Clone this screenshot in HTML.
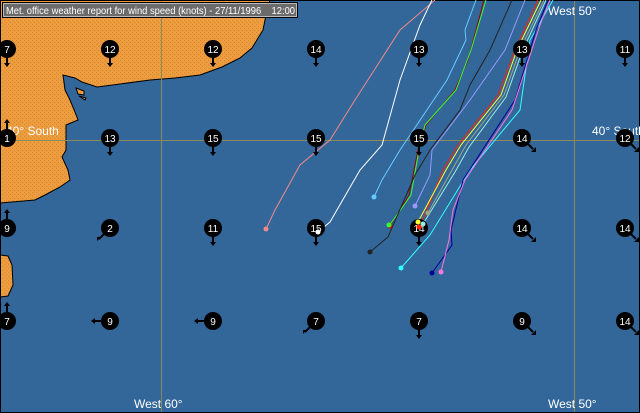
<!DOCTYPE html>
<html><head><meta charset="utf-8"><style>
html,body{margin:0;padding:0;background:#336699;}
svg{display:block}
</style></head><body>
<svg width="640" height="413" viewBox="0 0 640 413" xmlns="http://www.w3.org/2000/svg" font-family="Liberation Sans, sans-serif">
<defs>
<pattern id="land" width="4" height="4" patternUnits="userSpaceOnUse">
<rect width="4" height="4" fill="#eb9c3c"/>
<rect x="0" y="0" width="1" height="1" fill="#e0823c"/>
<rect x="2" y="2" width="1" height="1" fill="#e0823c"/>
<rect x="3" y="0" width="1" height="1" fill="#f0a640"/>
</pattern>
</defs>
<rect width="640" height="413" fill="#336699"/>
<path d="M0,0 L270,0 L265,20 L263,30 L252,48 L240,58 L222,67 L200,75 L175,78 L150,80 L120,84 L97,87 L82,82 L75,78 L63,75 L65,90 L70,100 L75,112 L78,120 L66,125 L66,150 L62,157 L68,170 L70,180 L60,187 L45,195 L35,200 L0,203 Z" fill="url(#land)" stroke="#000" stroke-width="1"/>
<path d="M76,88 L84,91 L84,95 L78,94 Z M79,96 L86,98 L85,100 Z" fill="url(#land)" stroke="#000"/>
<path d="M0,255 L8,256 L12,265 L13,285 L8,296 L0,297 Z" fill="url(#land)" stroke="#000"/>
<g stroke="#8a8a5a" stroke-width="1">
<line x1="0" y1="140.5" x2="640" y2="140.5"/>
<line x1="161.5" y1="0" x2="161.5" y2="413"/>
<line x1="574.5" y1="0" x2="574.5" y2="413"/>
</g>
<rect x="0.5" y="0.5" width="639" height="412" fill="none" stroke="#000"/>
<g fill="#fff" font-size="12">
<text x="6" y="135">40° South</text>
<text x="592" y="135">40° South</text>
<text x="548" y="15">West 50°</text>
<text x="548" y="408">West 50°</text>
<text x="134" y="408">West 60°</text>
</g>
<g fill="none" stroke-width="1">
<polyline stroke="#f08a8a" points="435,0 420,13 400,30 355,100 330,140 300,165 275,210 266,229"/>
<polyline stroke="#ffffff" points="432,0 420,25 400,80 382,145 360,170 330,222 318,232"/>
<polyline stroke="#66ccff" points="476,0 465,30 466,40 447,80 400,150 382,180 374,197"/>
<polyline stroke="#990000" points="484,0 468,60 455,90 426,125 418,150 409,195 390,226"/>
<polyline stroke="#33ff33" points="486,0 471,50 456,90 425,125 419,150 411,195 389,226"/>
<polyline stroke="#222" points="512,0 490,50 470,85 460,110 430,150 415,175 388,237 370,252"/>
<polyline stroke="#9999ff" points="525,0 505,50 470,100 432,150 430,175 415,206"/>
<polyline stroke="#ff2200" points="538,0 515,50 498,95 458,145 443,170 420,227"/>
<polyline stroke="#ffff33" points="541,0 517,50 501,95 461,145 446,170 418,222"/>
<polyline stroke="#99aa88" points="544,0 520,50 504,95 466,145 452,170 428,213"/>
<polyline stroke="#99eedd" points="546,0 522,52 506,97 469,147 455,172 423,224"/>
<polyline stroke="#33ffff" points="553,0 530,40 520,110 470,170 430,235 401,268"/>
<polyline stroke="#000099" points="548,0 536,30 515,100 463,180 451,230 452,245 432,273"/>
<polyline stroke="#ff77dd" points="550,0 540,25 512,110 465,180 453,210 449,240 441,272"/>
</g>
<g stroke="#000" stroke-width="2" fill="#000">
<path d="M7,57V64 M110,57V64 M213,57V64 M316,57V64 M419,57V64 M522,57V64 M625,57V64"/>
<path d="M110,146V153 M213,146V153 M316,146V153 M419,146V153"/>
<path d="M213,236V243 M316,236V243 M419,236V243"/>
<path d="M419,329V336"/>
<path d="M7,130V122 M7,220V212 M7,313V305"/>
<path d="M102,321H94 M205,321H197"/>
<path d="M104,234L99,239 M310,327L305,332"/>
<path d="M528,144L533,149 M631,144L636,149 M528,234L533,239 M631,234L636,239 M528,327L533,332 M631,327L636,332"/>
</g>
<g fill="#000" stroke="none">
<path d="M4,63H10L7,67Z M107,63H113L110,67Z M210,63H216L213,67Z M313,63H319L316,67Z M416,63H422L419,67Z M519,63H525L522,67Z M622,63H628L625,67Z"/>
<path d="M107,152H113L110,156Z M210,152H216L213,156Z M313,152H319L316,156Z M416,152H422L419,156Z"/>
<path d="M210,242H216L213,246Z M313,242H319L316,246Z M416,242H422L419,246Z M416,335H422L419,339Z"/>
<path d="M4,123H10L7,119Z M4,213H10L7,209Z M4,306H10L7,302Z"/>
<path d="M95,318V324L91,321Z M198,318V324L194,321Z"/>
<path d="M97,241L101,237L97,237Z M303,334L307,330L303,330Z"/>
<path d="M536,152L536,147L531,152Z M639,152L639,147L634,152Z M536,242L536,237L531,242Z M639,242L639,237L634,242Z M536,335L536,330L531,335Z M639,335L639,330L634,335Z"/>
<circle cx="7" cy="49" r="9"/><circle cx="110" cy="49" r="9"/><circle cx="213" cy="49" r="9"/><circle cx="316" cy="49" r="9"/><circle cx="419" cy="49" r="9"/><circle cx="522" cy="49" r="9"/><circle cx="625" cy="49" r="9"/>
<circle cx="7" cy="138" r="9"/><circle cx="110" cy="138" r="9"/><circle cx="213" cy="138" r="9"/><circle cx="316" cy="138" r="9"/><circle cx="419" cy="138" r="9"/><circle cx="522" cy="138" r="9"/><circle cx="625" cy="138" r="9"/>
<circle cx="7" cy="228" r="9"/><circle cx="110" cy="228" r="9"/><circle cx="213" cy="228" r="9"/><circle cx="316" cy="228" r="9"/><circle cx="419" cy="228" r="9"/><circle cx="522" cy="228" r="9"/><circle cx="625" cy="228" r="9"/>
<circle cx="7" cy="321" r="9"/><circle cx="110" cy="321" r="9"/><circle cx="213" cy="321" r="9"/><circle cx="316" cy="321" r="9"/><circle cx="419" cy="321" r="9"/><circle cx="522" cy="321" r="9"/><circle cx="625" cy="321" r="9"/>
</g>
<g font-size="10" text-anchor="middle" fill="#fff">
<text x="7" y="53">7</text><text x="110" y="53">12</text><text x="213" y="53">12</text><text x="316" y="53">14</text><text x="419" y="53">13</text><text x="522" y="53">13</text><text x="625" y="53">11</text>
<text x="7" y="142">1</text><text x="110" y="142">13</text><text x="213" y="142">15</text><text x="316" y="142">15</text><text x="419" y="142">15</text><text x="522" y="142">14</text><text x="625" y="142">12</text>
<text x="7" y="232">9</text><text x="110" y="232">2</text><text x="213" y="232">11</text><text x="316" y="232">15</text><text x="419" y="232">14</text><text x="522" y="232">14</text><text x="625" y="232">14</text>
<text x="7" y="325">7</text><text x="110" y="325">9</text><text x="213" y="325">9</text><text x="316" y="325">7</text><text x="419" y="325">7</text><text x="522" y="325">9</text><text x="625" y="325">14</text>
</g>
<g>
<circle cx="266" cy="229" r="2.5" fill="#f08a8a"/>
<circle cx="318" cy="232" r="2.5" fill="#fff"/>
<circle cx="374" cy="197" r="2.5" fill="#66ccff"/>
<circle cx="390" cy="226" r="2.5" fill="#cc0000"/>
<circle cx="389" cy="225" r="2.5" fill="#33ff33"/>
<circle cx="370" cy="252" r="2.5" fill="#222"/>
<circle cx="415" cy="206" r="2.5" fill="#9999ff"/>
<circle cx="428" cy="213" r="2.5" fill="#99aa88"/>
<circle cx="419" cy="227" r="2.5" fill="#ff2200"/>
<circle cx="418" cy="222" r="2.5" fill="#ffff33"/>
<circle cx="423" cy="224" r="2.5" fill="#99eedd"/>
<circle cx="401" cy="268" r="2.5" fill="#33ffff"/>
<circle cx="432" cy="273" r="2.5" fill="#000099"/>
<circle cx="441" cy="272" r="2.5" fill="#ff77dd"/>
</g>
<rect x="2.5" y="2.5" width="295" height="15" fill="#6b6b6b" stroke="#000"/>
<rect x="3.5" y="3.5" width="293" height="13" fill="none" stroke="#bbb"/>
<text x="6" y="14" font-size="10.5" fill="#fff" textLength="289" lengthAdjust="spacingAndGlyphs" xml:space="preserve">Met. office weather report for wind speed (knots) - 27/11/1996    12:00</text>
</svg>
</body></html>
